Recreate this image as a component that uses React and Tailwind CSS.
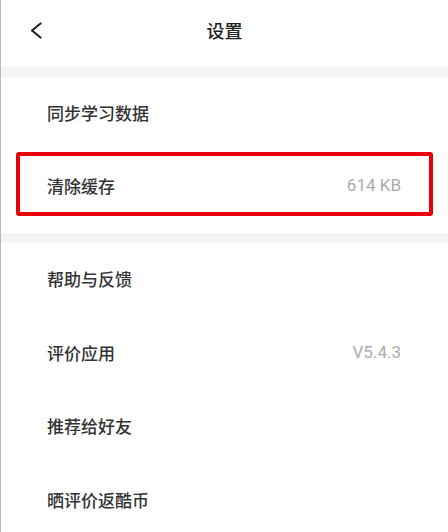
import React from "react";

const font = { fontFamily: '"Noto Sans CJK SC", "Noto Sans", sans-serif' };

function Row({ label, value, h = "h-[73.5px]", children }) {
  return (
    <div className={`relative flex items-center justify-between pl-[46px] pr-[47px] ${h}`}>
      <span className="text-[17px] font-medium text-[#333333] leading-none">{label}</span>
      {value && (
        <span className="text-[17px] text-[#ababab] leading-none" style={{ fontFamily: 'Roboto, "Noto Sans", sans-serif' }}>
          {value}
        </span>
      )}
      {children}
    </div>
  );
}

export default function App() {
  return (
    <div className="w-[448px] h-[532px] overflow-hidden bg-white border-l border-[#b8b8b8]" style={font}>
      <div className="relative flex items-center justify-center h-[59px]">
        <svg className="absolute left-[29px] top-[22px]" width="12" height="17" viewBox="0 0 12 17" fill="none">
          <polyline points="10.5,1.5 2,8.5 10.5,15.5" stroke="#222" strokeWidth="2.2" strokeLinecap="round" strokeLinejoin="round" />
        </svg>
        <span className="text-[18px] font-medium text-[#222222] leading-none">设置</span>
      </div>
      <div className="h-[8px] bg-white" />
      <div className="h-[10px] bg-[#f5f5f5]" />
      <div className="pb-[10px]">
        <Row label="同步学习数据" h="h-[71px]" />
        <Row label="清除缓存" value="614 KB" h="h-[75px]">
          <div className="absolute left-[15px] right-[15px] top-[4px] h-[64px] border-[4px] border-[#e8000b] rounded-[3px]" />
        </Row>
      </div>
      <div className="h-[10px] bg-[#f5f5f5]" />
      <div className="-mt-[1px]">
        <Row label="帮助与反馈" />
        <Row label="评价应用" value="V5.4.3" />
        <Row label="推荐给好友" />
        <Row label="晒评价返酷币" />
      </div>
    </div>
  );
}
